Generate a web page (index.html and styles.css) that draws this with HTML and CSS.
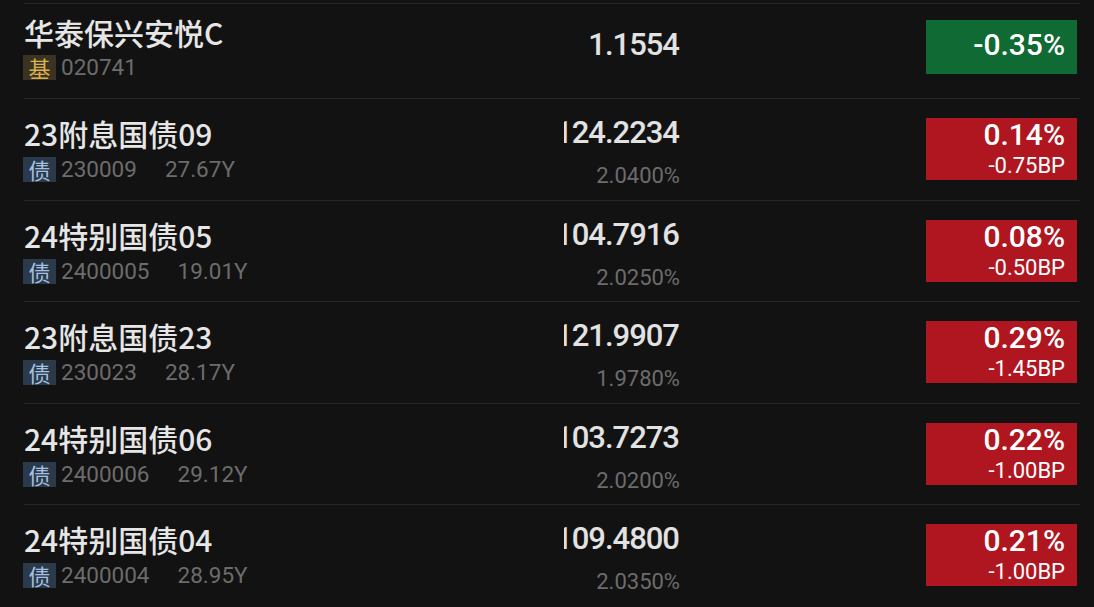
FILE: index.html
```html
<!DOCTYPE html>
<html lang="zh-CN">
<head>
<meta charset="utf-8">
<title>行情列表</title>
<link rel="stylesheet" href="styles.css">
</head>
<body>
<div class="list">
  <div class="row row-fund">
    <div class="name-col">
      <div class="title">华泰保兴安悦C</div>
      <div class="sub"><span class="tag tag-fund">基</span><span class="code">020741</span></div>
    </div>
    <div class="price-col"><div class="price">1.1554</div></div>
    <div class="chg-col"><div class="chg chg-single down"><div class="pct">-0.35%</div></div></div>
  </div>

  <div class="row">
    <div class="name-col">
      <div class="title">23附息国债09</div>
      <div class="sub"><span class="tag tag-bond">债</span><span class="code">230009</span><span class="term">27.67Y</span></div>
    </div>
    <div class="price-col"><div class="price">124.2234</div><div class="yield">2.0400%</div></div>
    <div class="chg-col"><div class="chg up"><div class="pct">0.14%</div><div class="bp">-0.75BP</div></div></div>
  </div>

  <div class="row">
    <div class="name-col">
      <div class="title">24特别国债05</div>
      <div class="sub"><span class="tag tag-bond">债</span><span class="code">2400005</span><span class="term">19.01Y</span></div>
    </div>
    <div class="price-col"><div class="price">104.7916</div><div class="yield">2.0250%</div></div>
    <div class="chg-col"><div class="chg up"><div class="pct">0.08%</div><div class="bp">-0.50BP</div></div></div>
  </div>

  <div class="row">
    <div class="name-col">
      <div class="title">23附息国债23</div>
      <div class="sub"><span class="tag tag-bond">债</span><span class="code">230023</span><span class="term">28.17Y</span></div>
    </div>
    <div class="price-col"><div class="price">121.9907</div><div class="yield">1.9780%</div></div>
    <div class="chg-col"><div class="chg up"><div class="pct">0.29%</div><div class="bp">-1.45BP</div></div></div>
  </div>

  <div class="row">
    <div class="name-col">
      <div class="title">24特别国债06</div>
      <div class="sub"><span class="tag tag-bond">债</span><span class="code">2400006</span><span class="term">29.12Y</span></div>
    </div>
    <div class="price-col"><div class="price">103.7273</div><div class="yield">2.0200%</div></div>
    <div class="chg-col"><div class="chg up"><div class="pct">0.22%</div><div class="bp">-1.00BP</div></div></div>
  </div>

  <div class="row">
    <div class="name-col">
      <div class="title">24特别国债04</div>
      <div class="sub"><span class="tag tag-bond">债</span><span class="code">2400004</span><span class="term">28.95Y</span></div>
    </div>
    <div class="price-col"><div class="price">109.4800</div><div class="yield">2.0350%</div></div>
    <div class="chg-col"><div class="chg up"><div class="pct">0.21%</div><div class="bp">-1.00BP</div></div></div>
  </div>
</div>
</body>
</html>
```

FILE: styles.css
```css
* { box-sizing: border-box; }

html, body {
  margin: 0;
  padding: 0;
  background: #121212;
  overflow: hidden;
}

body {
  width: 1094px;
  height: 607px;
  font-family: Roboto, "Noto Sans CJK SC", sans-serif;
}

.list {
  padding-top: 3px;
  margin-left: 24px;
  width: 1056px;
}

.row {
  display: flex;
  height: 101.6px;
  border-top: 1px solid #262626;
}

.row-fund {
  height: 95px;
}

.name-col {
  flex: none;
  width: 540px;
  padding-top: 16px;
}

.row-fund .name-col {
  padding-top: 10px;
}

.title {
  font-family: "Noto Sans CJK SC", sans-serif;
  font-size: 30px;
  font-weight: 500;
  line-height: 36px;
  color: #e6e6e6;
  white-space: nowrap;
}

.sub {
  display: flex;
  align-items: center;
  margin-top: 6px;
  height: 25px;
}

.row-fund .sub {
  margin-top: 5px;
}

.tag {
  display: flex;
  align-items: center;
  justify-content: center;
  width: 33px;
  height: 25px;
  margin-left: -1px;
  font-family: "Noto Sans CJK SC", sans-serif;
  font-size: 22px;
  line-height: 25px;
}

.tag-fund {
  background: #3a3222;
  color: #d9b04f;
}

.tag-bond {
  background: #2b3a4b;
  color: #a6c2e0;
}

.code, .term {
  font-family: Roboto, sans-serif;
  font-size: 22.5px;
  color: #6c6c6c;
  line-height: 25px;
}

.code {
  margin-left: 5px;
}

.term {
  margin-left: 28px;
}

.price-col {
  flex: none;
  width: 116px;
  padding-top: 16px;
  overflow: hidden;
  text-align: right;
}

.row-fund .price-col {
  padding-top: 23px;
}

.price {
  font-family: Roboto, sans-serif;
  font-size: 31px;
  font-weight: 500;
  letter-spacing: -1px;
  line-height: 36px;
  color: #e2e2e2;
  white-space: nowrap;
  display: flex;
  justify-content: flex-end;
  padding-right: 1px;
}

.yield {
  margin-top: 12px;
  font-family: Roboto, sans-serif;
  font-size: 22px;
  line-height: 26px;
  color: #6c6c6c;
  white-space: nowrap;
}

.chg-col {
  flex: none;
  margin-left: auto;
  margin-right: 3px;
  padding-top: 19px;
}

.row-fund .chg-col {
  padding-top: 16px;
}

.chg {
  width: 151px;
  height: 62px;
  padding: 2px 12px 0 0;
  text-align: right;
  color: #ffffff;
  font-family: Roboto, sans-serif;
}

.chg-single {
  height: 54px;
  padding-top: 10px;
}

.up { background: #b0161f; }
.down { background: #0f6a34; }

.pct {
  font-size: 30px;
  font-weight: 500;
  line-height: 30px;
}

.bp {
  margin-top: 2px;
  font-size: 22px;
  line-height: 28px;
}
```
